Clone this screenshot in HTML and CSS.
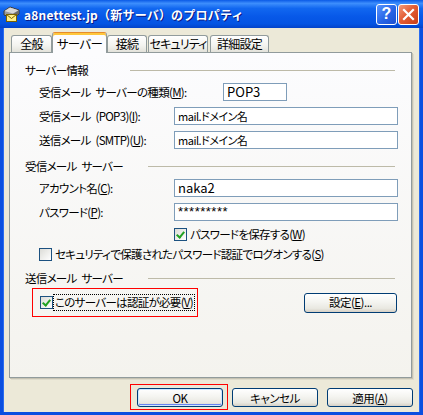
FILE: index.html
```html
<!DOCTYPE html>
<html lang="ja">
<head>
  <meta charset="UTF-8">
  <title>a8nettest.jp（新サーバ）のプロパティ</title>
  <link rel="stylesheet" href="styles.css">
</head>
<body>
  <div class="window">
    <div class="titlebar">
      <svg class="title-icon" width="17" height="17" viewBox="0 0 17 17">
        <path d="M1 5 L7 1 L16 4 L16 8 L10 12 L1 9 Z" fill="#9a9a9a" stroke="#3a3a3a" stroke-width="1"/>
        <path d="M1.5 5 L7 1.5 L15.5 4.2 L10 7.6 Z" fill="#d8d8d8"/>
        <path d="M10 8 L15.5 4.5 L15.5 7.8 L10 11.3 Z" fill="#6c6c6c"/>
        <rect x="3.5" y="8.5" width="10" height="7" fill="#fff08a" stroke="#7a6200"/>
        <path d="M3.5 8.5 L8.5 12.5 L13.5 8.5" fill="none" stroke="#7a6200"/>
      </svg>
      <span class="title-text">a8nettest.jp（新サーバ）のプロパティ</span>
      <div class="title-buttons">
        <span class="tb-btn tb-help">?</span>
        <span class="tb-btn tb-close">
          <svg width="13" height="13" viewBox="0 0 13 13">
            <path d="M2 2 L11 11 M11 2 L2 11" stroke="#fff" stroke-width="2.2" stroke-linecap="square"/>
          </svg>
        </span>
      </div>
    </div>

    <div class="client">
      <ul class="tabs">
        <li class="tab tab-general">全般</li>
        <li class="tab tab-server is-active">サーバー</li>
        <li class="tab tab-conn">接続</li>
        <li class="tab tab-security">セキュリティ</li>
        <li class="tab tab-advanced">詳細設定</li>
      </ul>

      <div class="panel">
        <div class="group-title">
          <span>サーバー情報</span>
          <span class="rule rule-wide"></span>
        </div>
        <div class="row">
          <span class="label label-wide">受信メール サーバーの種類(<u>M</u>):</span>
          <span class="field field-short">POP3</span>
        </div>
        <div class="row">
          <span class="label">受信メール (POP3)(<u>I</u>):</span>
          <span class="field field-small">mail.ドメイン名</span>
        </div>
        <div class="row">
          <span class="label">送信メール (SMTP)(<u>U</u>):</span>
          <span class="field field-small">mail.ドメイン名</span>
        </div>

        <div class="group-title group-gap">
          <span>受信メール サーバー</span>
          <span class="rule"></span>
        </div>
        <div class="row">
          <span class="label">アカウント名(<u>C</u>):</span>
          <span class="field">naka2</span>
        </div>
        <div class="row">
          <span class="label">パスワード(<u>P</u>):</span>
          <span class="field field-pass">*********</span>
        </div>
        <div class="check-row check-row-field">
          <span class="checkbox is-checked"></span>
          <span>パスワードを保存する(<u>W</u>)</span>
        </div>
        <div class="check-row">
          <span class="checkbox"></span>
          <span>セキュリティで保護されたパスワード認証でログオンする(<u>S</u>)</span>
        </div>

        <div class="group-title group-gap">
          <span>送信メール サーバー</span>
          <span class="rule"></span>
        </div>
        <div class="auth-row">
          <div class="highlight highlight-auth">
            <span class="checkbox is-checked"></span>
            <span class="focus-text">このサーバーは認証が必要(<u>V</u>)</span>
          </div>
          <button class="btn btn-settings">設定(<u>E</u>)...</button>
        </div>
      </div>

      <div class="footer">
        <div class="highlight highlight-ok">
          <button class="btn btn-default">OK</button>
        </div>
        <button class="btn btn-cancel">キャンセル</button>
        <button class="btn btn-apply">適用(<u>A</u>)</button>
      </div>
    </div>
  </div>
</body>
</html>
```

FILE: styles.css
```css
body {
  margin: 0;
  font-family: "Noto Sans CJK JP", "Liberation Sans", sans-serif;
  font-size: 11.5px;
  letter-spacing: -0.7px;
  word-spacing: 3px;
  font-feature-settings: "palt";
  color: #000;
  background: #fff;
}

.window {
  width: 423px;
  height: 415px;
  display: flex;
  flex-direction: column;
  background: #ece9d8;
}

/* title bar */
.titlebar {
  height: 28px;
  flex: none;
  display: flex;
  align-items: center;
  background: linear-gradient(to bottom, #0a5ae6 0%, #3d8efc 12%, #1167f0 30%, #0758e8 60%, #0454e3 85%, #0343c9 100%);
}

.title-icon {
  margin-left: 3px;
  margin-top: 1px;
}

.title-text {
  margin-left: 4px;
  color: #fff;
  font-weight: bold;
  font-size: 12px;
  letter-spacing: 0.2px;
  word-spacing: 0;
  font-feature-settings: normal;
  text-shadow: 1px 1px 0 #0a1883;
  white-space: nowrap;
}

.title-buttons {
  margin-left: auto;
  margin-right: 4px;
  display: flex;
  gap: 1px;
}

.tb-btn {
  box-sizing: border-box;
  width: 21px;
  height: 21px;
  border: 1px solid #fff;
  border-radius: 3px;
  display: flex;
  align-items: center;
  justify-content: center;
  color: #fff;
}

.tb-help {
  font-family: "Liberation Sans", sans-serif;
  font-weight: bold;
  font-size: 16px;
  letter-spacing: 0;
  background: linear-gradient(135deg, #5a95ff, #2664e6 55%, #1c4fd0);
}

.tb-close {
  background: linear-gradient(135deg, #f39b7c, #e35d35 45%, #c93e18);
}

/* client area */
.client {
  flex: 1;
  border: 3px solid #0b4fe0;
  border-top: 0;
  box-shadow: inset 1px 0 0 #2a6cf0, inset -1px 0 0 #2a6cf0;
  padding: 0 7px 0 6px;
}

.tabs {
  list-style: none;
  margin: 4px 0 -1px 2px;
  padding: 0;
  height: 21px;
  display: flex;
  align-items: flex-end;
  position: relative;
  z-index: 1;
}

.tab {
  box-sizing: border-box;
  height: 17px;
  margin-bottom: 1px;
  border: 1px solid #919b9c;
  border-bottom: 0;
  border-radius: 3px 3px 0 0;
  background: linear-gradient(to bottom, #ffffff, #f3f3ef 60%, #e3e2da);
  text-align: center;
  line-height: 16px;
  font-size: 12px;
  white-space: nowrap;
}

.tab.is-active {
  height: 21px;
  margin-bottom: 0;
  border-top: 1px solid #e68b2c;
  box-shadow: inset 0 2px 0 #ffc73c;
  background: #fcfcfe;
  line-height: 21px;
  font-size: 12.5px;
}

.tab-general { width: 41px; }
.tab-server { width: 55px; }
.tab-conn { width: 40px; }
.tab-security { width: 60px; margin-left: 1px; letter-spacing: -0.9px; }
.tab-advanced { width: 59px; margin-left: 2px; }

.panel {
  box-sizing: border-box;
  width: 403px;
  height: 326px;
  border: 1px solid #919b9c;
  box-shadow: 1px 1px 0 #c5c2b2, 2px 2px 0 #dedbcb;
  background: linear-gradient(to bottom, #fcfcfe, #f4f3ee);
  padding: 10px 13px 0 15px;
}

.group-title {
  height: 14px;
  line-height: 14px;
  display: flex;
  align-items: center;
  white-space: nowrap;
}

.group-gap {
  margin-top: 10px;
}

.rule {
  margin-left: auto;
  margin-right: 3px;
  width: 247px;
  height: 1px;
  background: #bdbaa8;
}

.rule-wide {
  width: 265px;
}

.row {
  height: 18px;
  margin-top: 6px;
  display: flex;
  align-items: center;
  padding-left: 14px;
}

.label {
  width: 135px;
  flex: none;
  white-space: nowrap;
}

.label-wide {
  width: 184px;
}

.field {
  box-sizing: border-box;
  flex: 1;
  height: 18px;
  border: 1px solid #7f9db9;
  background: #fff;
  padding-left: 3px;
  line-height: 16px;
  font-size: 13px;
  letter-spacing: 0;
  white-space: nowrap;
}

.field-short {
  flex: none;
  width: 64px;
}

.field-small {
  font-size: 11px;
  letter-spacing: -0.5px;
}

.field-pass {
  font-family: "Liberation Sans", sans-serif;
  font-size: 13px;
  letter-spacing: 0.5px;
}

.check-row {
  height: 14px;
  margin-top: 6px;
  display: flex;
  align-items: center;
  gap: 3px;
  padding-left: 14px;
  white-space: nowrap;
}

.check-row-field {
  padding-left: 149px;
}

.checkbox {
  box-sizing: border-box;
  width: 13px;
  height: 13px;
  flex: none;
  border: 1px solid #1c5180;
  background: linear-gradient(135deg, #dcdcd7, #ffffff);
  position: relative;
}

.checkbox.is-checked::after {
  content: "";
  position: absolute;
  left: 2px;
  top: 1px;
  width: 3px;
  height: 6px;
  border: solid #21a121;
  border-width: 0 2px 2px 0;
  transform: translate(1px, 0) rotate(40deg);
}

.auth-row {
  height: 29px;
  margin-top: 3px;
  display: flex;
  align-items: center;
}

.highlight {
  border: 1px solid #ff0000;
  display: flex;
  align-items: center;
}

.highlight-auth {
  box-sizing: border-box;
  height: 29px;
  margin-left: 7px;
  padding: 0 3px 0 7px;
  gap: 1px;
}

.focus-text {
  outline: 1px dotted #000;
  outline-offset: 0;
  padding: 0 1px;
  line-height: 15px;
  white-space: nowrap;
}

.btn {
  box-sizing: border-box;
  height: 20px;
  border: 1px solid #003c74;
  border-radius: 3px;
  background: linear-gradient(to bottom, #ffffff, #f4f4f0 45%, #e9e8e1 80%, #d6d0c5);
  font-family: inherit;
  font-feature-settings: "palt";
  font-size: 11.5px;
  letter-spacing: -0.5px;
  color: #000;
  padding: 0;
  line-height: 17px;
}

.btn-settings {
  width: 93px;
  margin-left: auto;
  margin-right: 1px;
}

.footer {
  margin-top: 6px;
  display: flex;
  justify-content: flex-end;
  align-items: flex-start;
}

.highlight-ok {
  padding: 3px 4px 2px 6px;
}

.footer .btn {
  width: 86px;
  height: 19px;
  line-height: 16px;
}

.btn-default {
  box-shadow: inset 0 0 0 1px #cee7ff, inset 0 -1px 0 1px #6982ee;
}

.btn-cancel {
  margin-top: 4px;
  margin-left: 4px;
}

.btn-apply {
  margin-top: 4px;
  margin-left: 9px;
}
```
